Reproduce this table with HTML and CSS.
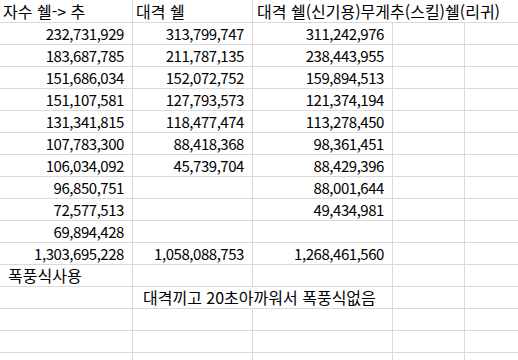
FILE: index.html
```html
<!DOCTYPE html>
<html lang="ko">
<head>
<meta charset="utf-8">
<link rel="stylesheet" href="styles.css">
</head>
<body>
<div class="sheet">
  <div class="c first top">자수 쉘-&gt; 추</div>
  <div class="c top">대격 쉘</div>
  <div class="c top span3">대격 쉘(신기용)무게추(스킬)쉘(리귀)</div>

  <div class="c first num">232,731,929</div><div class="c num">313,799,747</div><div class="c num">311,242,976</div><div class="c"></div><div class="c"></div>
  <div class="c first num">183,687,785</div><div class="c num">211,787,135</div><div class="c num">238,443,955</div><div class="c"></div><div class="c"></div>
  <div class="c first num">151,686,034</div><div class="c num">152,072,752</div><div class="c num">159,894,513</div><div class="c"></div><div class="c"></div>
  <div class="c first num">151,107,581</div><div class="c num">127,793,573</div><div class="c num">121,374,194</div><div class="c"></div><div class="c"></div>
  <div class="c first num">131,341,815</div><div class="c num">118,477,474</div><div class="c num">113,278,450</div><div class="c"></div><div class="c"></div>
  <div class="c first num">107,783,300</div><div class="c num">88,418,368</div><div class="c num">98,361,451</div><div class="c"></div><div class="c"></div>
  <div class="c first num">106,034,092</div><div class="c num">45,739,704</div><div class="c num">88,429,396</div><div class="c"></div><div class="c"></div>
  <div class="c first num">96,850,751</div><div class="c"></div><div class="c num">88,001,644</div><div class="c"></div><div class="c"></div>
  <div class="c first num">72,577,513</div><div class="c"></div><div class="c num">49,434,981</div><div class="c"></div><div class="c"></div>
  <div class="c first num">69,894,428</div><div class="c"></div><div class="c"></div><div class="c"></div><div class="c"></div>
  <div class="c first num">1,303,695,228</div><div class="c num">1,058,088,753</div><div class="c num">1,268,461,560</div><div class="c"></div><div class="c"></div>
  <div class="c first indent">폭풍식사용</div><div class="c"></div><div class="c"></div><div class="c"></div><div class="c"></div>
  <div class="c first"></div><div class="c span2 indent2">대격끼고 20초아까워서 폭풍식없음</div><div class="c"></div><div class="c"></div>
  <div class="c first"></div><div class="c"></div><div class="c"></div><div class="c"></div><div class="c"></div>
  <div class="c first"></div><div class="c"></div><div class="c"></div><div class="c"></div><div class="c"></div>
  <div class="c first"></div><div class="c"></div><div class="c"></div><div class="c"></div><div class="c"></div>
</div>
</body>
</html>
```

FILE: styles.css
```css
html, body {
  margin: 0;
  padding: 0;
  background: #ffffff;
}
body {
  width: 518px;
  height: 360px;
  overflow: hidden;
  font-family: "Noto Sans CJK KR", "Noto Sans", sans-serif;
  font-size: 16px;
  color: #000000;
}
.sheet {
  display: grid;
  grid-template-columns: 132px 120px 140px 72px 1fr;
  grid-auto-rows: 22px;
}
.c {
  box-sizing: border-box;
  border-left: 1px solid #dadada;
  border-top: 1px solid #dadada;
  line-height: 21px;
  padding: 0 3px;
  white-space: nowrap;
  overflow: visible;
}
.first {
  border-left: none;
}
.top {
  border-top: none;
  line-height: 22px;
}
.num {
  font-size: 15px;
  letter-spacing: -0.45px;
  text-align: right;
  padding-right: 8px;
}
.span3 {
  grid-column: span 3;
  padding-left: 4px;
}
.span2 {
  grid-column: span 2;
}
.indent {
  padding-left: 8px;
}
.indent2 {
  padding-left: 10px;
}
```
